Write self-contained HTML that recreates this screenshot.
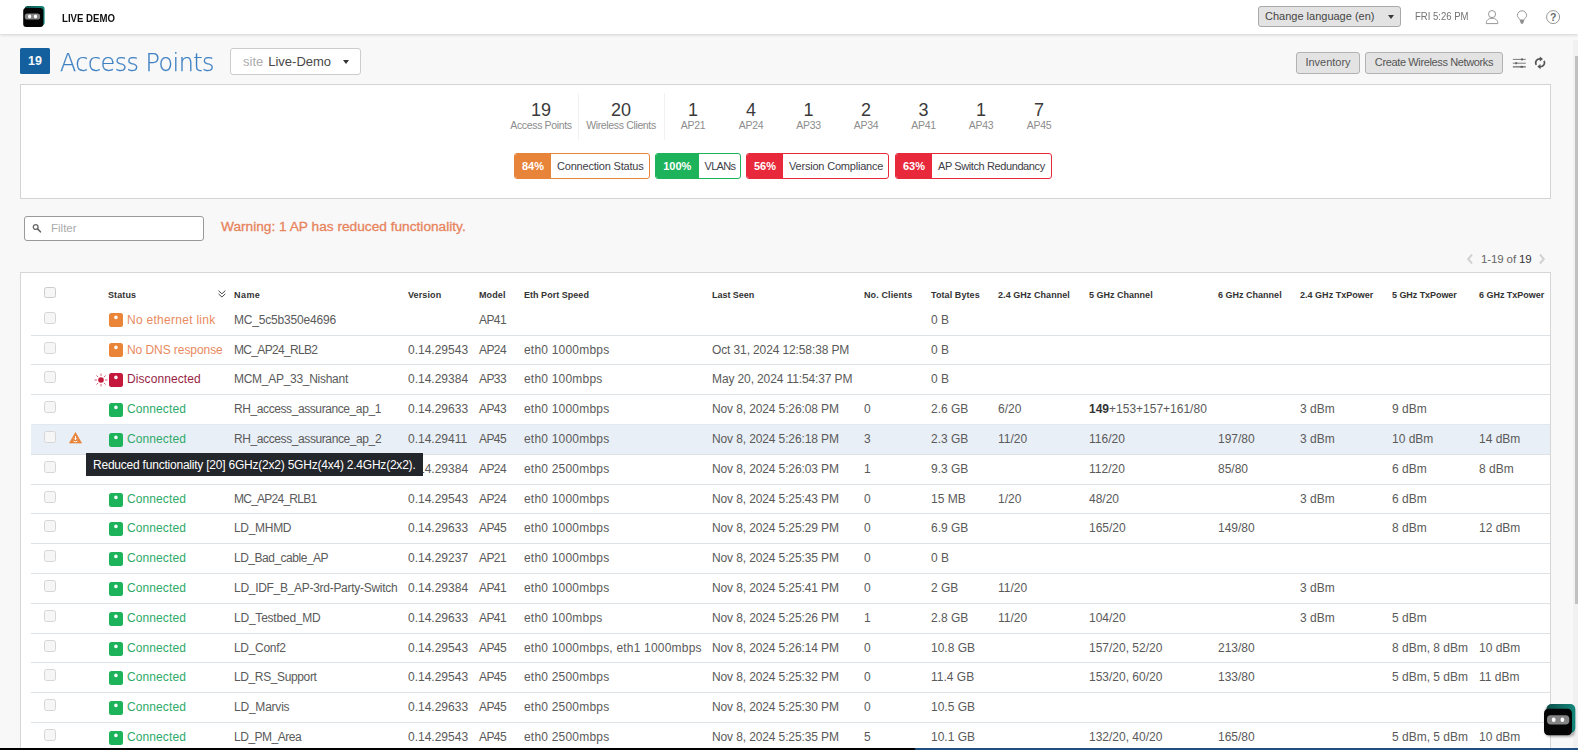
<!DOCTYPE html>
<html lang="en"><head><meta charset="utf-8"><title>Access Points</title>
<style>
*{box-sizing:border-box;margin:0;padding:0}
html,body{width:1578px;height:750px;overflow:hidden;background:#f8f8f8}
body{font-family:"Liberation Sans",sans-serif;font-size:12px;color:#555;position:relative}
.topbar{position:absolute;left:0;top:0;width:1578px;height:34px;background:#fff;box-shadow:0 1px 3px rgba(0,0,0,.16)}
.abs{position:absolute;white-space:nowrap}
.logo{position:absolute}
.brand{left:61.5px;top:12px;font-size:11px;font-weight:bold;color:#111;transform-origin:0 50%;transform:scaleX(.875)}
.lang{left:1258px;top:6px;width:143px;height:21px;background:#e3e3e3;border:1px solid #a9a9a9;border-radius:3px;font-size:11px;color:#454545;line-height:19px;padding-left:6px}
.lang:after{content:"";position:absolute;right:6.5px;top:8px;border:3.7px solid transparent;border-top:4.2px solid #3a3a3a;border-bottom:0}
.clock{left:1414.5px;top:10px;font-size:11.5px;color:#737373;transform-origin:0 50%;transform:scaleX(.83)}
.badge{left:20px;top:48px;width:30px;height:26px;background:#14609e;color:#f4f8fc;font-weight:bold;font-size:12.5px;line-height:27px;text-align:center;border-radius:1.5px}
.title{left:60px;top:46px;-webkit-text-stroke:.25px #3f80c2;font-family:'DejaVu Sans','Liberation Sans',sans-serif;font-weight:200;font-size:25px;color:#3f80c2;line-height:34px;letter-spacing:-.5px;transform-origin:0 50%;transform:scaleX(.95)}
.site{left:230px;top:48px;width:131px;height:27px;background:#fff;border:1px solid #ccc;border-radius:3px;font-size:13px;line-height:25px;color:#484848;padding-left:12px}
.site em{font-style:normal;color:#adadad;margin-right:5px}
.site:after{content:"";position:absolute;right:11.5px;top:10.5px;border:3.6px solid transparent;border-top:4.2px solid #333;border-bottom:0}
.btn{top:52px;height:22px;background:#e3e3e3;border:1px solid #b2b2b2;border-radius:3px;font-size:11px;color:#555;line-height:19.5px;text-align:center}
.panel{left:20px;top:84px;width:1531px;height:115px;background:#fff;border:1px solid #d3d3d3}
.stat{position:absolute;top:100px;text-align:center;white-space:nowrap;transform:translateX(-50%)}
.stat b{display:block;font-weight:normal;font-size:18px;line-height:20px;color:#3a3a3a}
.stat i{display:block;font-style:normal;font-size:10.5px;line-height:12px;color:#8c8c8c;margin-top:-1px;letter-spacing:-.35px}
.vdiv{position:absolute;top:93px;width:1px;height:47px;background:#f1f1f1}
.pill{position:absolute;top:153px;height:26px;border:1px solid;border-radius:3px;background:#fff;font-size:11px;line-height:25px;letter-spacing:-.2px;color:#3d4047;white-space:nowrap;overflow:hidden}
.pill b{display:inline-block;height:26px;margin-top:-1px;color:#fff;font-weight:bold;text-align:center;vertical-align:top;line-height:27px;letter-spacing:0;padding-left:1px}
.pill span{display:inline-block;padding-left:6px}
.filter{left:24px;top:216px;width:180px;height:25px;background:#fff;border:1px solid #9a9a9a;border-radius:3px;font-size:11.5px;color:#aaa;line-height:23px;padding-left:26px}
.warnmsg{left:221px;top:219px;font-size:13.7px;color:#e8835c;font-weight:normal;-webkit-text-stroke:0.3px #e8835c}
.pager{left:1481px;top:253px;font-size:11.5px;color:#666;letter-spacing:-.12px}
.pager b{color:#333;font-weight:normal}
.tbl{position:absolute;left:20px;top:272px;width:1531px;height:480px;background:#fff;border:1px solid #d6d6d6;border-bottom:0}
.tbl>*{position:absolute}
.hrow{left:0;top:0;width:1529px;height:33px}
.hrow .h{position:absolute;top:16px;font-size:9px;font-weight:bold;color:#333;white-space:nowrap;margin-left:-21px;line-height:12px}
.sort{position:absolute;left:196.8px;top:16.6px}
.cb{position:absolute;left:23px;top:6.4px;width:11.6px;height:11.3px;border:1px solid #d6d6d6;border-radius:2.5px;background:#f6f6f6}
.hcb{top:14.2px;border-color:#cbcbcb}
.row{left:10px;width:1519px;height:30px;border-top:1px solid #dde2e7;margin-top:-273px}
.row.first{border-top-color:transparent}
.row.hl{background:#e9eff6;border-top-color:#e2e8ef}
.row .cb{left:13px}
.row>span.c,.row>span.st{position:absolute;top:7px;line-height:14px;white-space:nowrap;font-size:12px;color:#5a5a5a}
.row>span.c{margin-left:-31px}
.row b{color:#333}
.ic{position:absolute;left:78.1px;top:8px;width:14px;height:13.5px;border-radius:2.5px}
.ic i{position:absolute;left:0;top:0;width:100%;height:100%;background:radial-gradient(circle at 6.9px 4.4px,rgba(255,255,255,.97) 0,rgba(255,255,255,.95) 1.25px,rgba(255,255,255,0) 2.3px)}
.ic.or{background:#ea8436}.ic.rd{background:#c4183c}.ic.gr{background:#1db35a}
.row>span.st{left:96px}
.st.or{color:#e98a60!important}.st.rd{color:#971f45!important}.st.gr{color:#2eaa69!important}
.sun{position:absolute;left:62.9px;top:8.2px}
.warn{position:absolute;left:37.8px;top:7.1px}
.tip{left:65px;top:180px;width:337px;letter-spacing:-.22px;height:23px;background:#23262b;color:#fff;font-size:12px;line-height:25px;padding-left:7px;white-space:nowrap}
.botbar{position:absolute;left:0;top:748px;width:1578px;height:2px;background:linear-gradient(90deg,#000 0,#000 914px,#1f4e80 916px,#1f4e80 100%)}
.sbtrack{position:absolute;left:1573px;top:40px;width:5px;height:708px;background:#f1f1f1}
.sbthumb{position:absolute;left:1575px;top:56px;width:3px;height:548px;background:#c1c1c1}
.chat{position:absolute;left:1541px;top:701px}

.c.name{letter-spacing:-.25px}
.c.mod{letter-spacing:-.6px}
.btn.w{letter-spacing:-.37px}

.c.eth{letter-spacing:.2px}
.c.seen{letter-spacing:-.12px}
.pill.v span{letter-spacing:-.7px}
.pill.r span{letter-spacing:-.4px}

</style></head>
<body>
<div class="sbtrack"></div><div class="sbthumb"></div>
<div class="topbar"></div>
<svg class="logo" style="left:22px;top:5px" width="25" height="24" viewBox="0 0 25 24"><defs><linearGradient id="tg" x1="0" y1="0" x2="1" y2="0"><stop offset="0" stop-color="#0b4f49"/><stop offset="1" stop-color="#14877a"/></linearGradient></defs><rect x="2.6" y="1" width="20" height="19.6" rx="3" fill="url(#tg)"/><rect x="1.2" y="3.1" width="20.1" height="19" rx="3" fill="#050505"/><rect x="2.8" y="8.6" width="15.3" height="5.9" rx="2.6" fill="#858585"/><ellipse cx="7.6" cy="11.6" rx="1.6" ry="2" fill="#fff"/><ellipse cx="13.5" cy="11.6" rx="1.6" ry="2" fill="#fff"/></svg>
<div class="abs brand">LIVE DEMO</div>
<div class="abs lang">Change language (en)</div>
<div class="abs clock">FRI 5:26 PM</div>
<svg class="logo" style="left:1484px;top:8px" width="16" height="18" viewBox="0 0 16 18"><circle cx="8.05" cy="6.1" r="3.55" fill="none" stroke="#8a8a8a" stroke-width=".9"/><path d="M2.3 15.6C2.1 12.2 4.6 10.3 8.05 10.3S14 12.2 13.8 15.6Z" fill="none" stroke="#8a8a8a" stroke-width=".9" stroke-linejoin="round"/></svg>
<svg class="logo" style="left:1515px;top:8px" width="14" height="18" viewBox="0 0 14 18"><path d="M4.7 11.5C4.5 10.2 2.4 9.5 2.4 7.4A4.6 4.6 0 0 1 11.6 7.4C11.6 9.5 9.5 10.2 9.3 11.5" fill="none" stroke="#8a8a8a" stroke-width=".9"/><path d="M4.5 11.4H9.5L8.1 15.4Q7 16.2 5.9 15.4Z" fill="#8e8e8e"/></svg>
<svg class="logo" style="left:1545px;top:9px" width="16" height="16" viewBox="0 0 16 16"><circle cx="8.1" cy="8.1" r="6.5" fill="none" stroke="#8a8a8a" stroke-width=".9"/><text x="8.1" y="11.9" font-family="Liberation Sans, sans-serif" font-size="10.5" font-weight="bold" fill="#6a6a6a" text-anchor="middle">?</text></svg>
<div class="abs badge">19</div>
<div class="abs title">Access Points</div>
<div class="abs site"><em>site</em>Live-Demo</div>
<div class="abs btn" style="left:1296px;width:64px">Inventory</div>
<div class="abs btn w" style="left:1365px;width:138px">Create Wireless Networks</div>
<svg class="logo" style="left:1512px;top:56px" width="15" height="13" viewBox="0 0 15 13"><g stroke="#6e6e6e" stroke-width=".9"><path d="M0.8 3.4H13.8M0.8 7.2H13.8"/></g><path d="M0.8 10.8H13.8" stroke="#8c8c8c" stroke-width="1.7"/><g fill="#5a5a5a"><rect x="9.2" y="2.4" width="1.7" height="2"/><rect x="3.4" y="6.2" width="1.7" height="2"/><rect x="8.6" y="9.9" width="2.2" height="1.8"/></g></svg>
<svg class="logo" style="left:1534px;top:56px" width="12" height="14" viewBox="0 0 12 14"><path d="M2.3 8.9A4 4 0 0 1 6.4 2.9" fill="none" stroke="#555" stroke-width="1.7"/><path d="M5.8 0.5L9 3.1L5.8 5.6Z" fill="#555"/><path d="M10 4.9A4 4 0 0 1 5.9 10.7" fill="none" stroke="#555" stroke-width="1.7"/><path d="M6.5 8.1L3.3 10.6L6.5 13.2Z" fill="#555"/></svg>
<div class="abs panel"></div>
<div class="stat" style="left:541px"><b>19</b><i>Access Points</i></div>
<div class="vdiv" style="left:578px"></div>
<div class="stat" style="left:621px"><b>20</b><i>Wireless Clients</i></div>
<div class="vdiv" style="left:664px"></div>
<div class="stat" style="left:693px"><b>1</b><i>AP21</i></div>
<div class="stat" style="left:751px"><b>4</b><i>AP24</i></div>
<div class="stat" style="left:808.5px"><b>1</b><i>AP33</i></div>
<div class="stat" style="left:866px"><b>2</b><i>AP34</i></div>
<div class="stat" style="left:923.5px"><b>3</b><i>AP41</i></div>
<div class="stat" style="left:981px"><b>1</b><i>AP43</i></div>
<div class="stat" style="left:1039px"><b>7</b><i>AP45</i></div>
<div class="pill" style="left:514px;width:136px;border-color:#e8833a"><b style="width:37px;background:#e8833a;margin-left:-1px">84%</b><span>Connection Status</span></div>
<div class="pill v" style="left:655px;width:86px;border-color:#1db35a"><b style="width:43.5px;background:#1db35a;margin-left:-1px">100%</b><span>VLANs</span></div>
<div class="pill" style="left:746px;width:143px;border-color:#e8293b"><b style="width:37px;background:#e8293b;margin-left:-1px">56%</b><span>Version Compliance</span></div>
<div class="pill r" style="left:895px;width:157px;border-color:#e8293b"><b style="width:37px;background:#e8293b;margin-left:-1px">63%</b><span>AP Switch Redundancy</span></div>
<div class="abs filter">Filter</div>
<svg class="logo" style="left:32px;top:223px" width="10" height="10" viewBox="0 0 10 10"><circle cx="3.7" cy="4" r="2.4" fill="none" stroke="#666" stroke-width="1.3"/><path d="M5.6 5.9L8.4 8.8" stroke="#666" stroke-width="1.6" stroke-linecap="round"/></svg>
<div class="abs warnmsg">Warning: 1 AP has reduced functionality.</div>
<svg class="logo" style="left:1466px;top:253px" width="8" height="12" viewBox="0 0 8 12"><path d="M6 1.5L2.2 6L6 10.5" fill="none" stroke="#d2d2d2" stroke-width="2"/></svg>
<div class="abs pager">1-19 of <b>19</b></div>
<svg class="logo" style="left:1538px;top:253px" width="8" height="12" viewBox="0 0 8 12"><path d="M2 1.5L5.8 6L2 10.5" fill="none" stroke="#d2d2d2" stroke-width="2"/></svg>
<div class="tbl">
<div class="hrow"><span class="cb hcb"></span><span class="h" style="left:108px;letter-spacing:.11px">Status</span><svg class="sort" viewBox="0 0 8 8" width="8" height="8"><path d="M0.5 0.7 L3.9 3.8 L7.3 0.7 M0.5 3.9 L3.9 7 L7.3 3.9" fill="none" stroke="#484848" stroke-width="1"/></svg><span class="h" style="left:234px;letter-spacing:0.45px">Name</span><span class="h" style="left:408px;letter-spacing:0.11px">Version</span><span class="h" style="left:479px;letter-spacing:0.12px">Model</span><span class="h" style="left:524px;letter-spacing:0.03px">Eth Port Speed</span><span class="h" style="left:712px;letter-spacing:-0.04px">Last Seen</span><span class="h" style="left:864px;letter-spacing:0.12px">No. Clients</span><span class="h" style="left:931px;letter-spacing:0.08px">Total Bytes</span><span class="h" style="left:998px;letter-spacing:0.06px">2.4 GHz Channel</span><span class="h" style="left:1089px;letter-spacing:0.01px">5 GHz Channel</span><span class="h" style="left:1218px;letter-spacing:0.01px">6 GHz Channel</span><span class="h" style="left:1300px;letter-spacing:0.02px">2.4 GHz TxPower</span><span class="h" style="left:1392px;letter-spacing:-0.06px">5 GHz TxPower</span><span class="h" style="left:1479px;letter-spacing:-0.03px">6 GHz TxPower</span></div>
<div class="row first" style="top:305px"><span class="cb"></span><span class="ic or" style="top:7px"><i></i></span><span class="st or" style="letter-spacing:0.28px">No ethernet link</span><span class="c name" style="left:234px;letter-spacing:-0.18px">MC_5c5b350e4696</span><span class="c mod" style="left:479px">AP41</span><span class="c byt" style="left:931px">0 B</span></div>
<div class="row" style="top:335px"><span class="cb"></span><span class="ic or" style="top:7px"><i></i></span><span class="st or" style="letter-spacing:-0.07px">No DNS response</span><span class="c name" style="left:234px;letter-spacing:-0.67px">MC_AP24_RLB2</span><span class="c ver" style="left:408px">0.14.29543</span><span class="c mod" style="left:479px">AP24</span><span class="c eth" style="left:524px">eth0 1000mbps</span><span class="c seen" style="left:712px">Oct 31, 2024 12:58:38 PM</span><span class="c byt" style="left:931px">0 B</span></div>
<div class="row" style="top:364px"><span class="cb"></span><svg class="sun" viewBox="0 0 14 14" width="14" height="14"><circle cx="7" cy="7" r="2.8" fill="#c4183c"/><g stroke="#d2506c" stroke-width=".9" stroke-linecap="round"><path d="M7 0.9V2.7M7 11.3V13.1M0.9 7H2.7M11.3 7H13.1M2.7 2.7L3.9 3.9M10.1 10.1L11.3 11.3M2.7 11.3L3.9 10.1M10.1 3.9L11.3 2.7"/></g></svg><span class="ic rd"><i></i></span><span class="st rd" style="letter-spacing:0.08px">Disconnected</span><span class="c name" style="left:234px;letter-spacing:-0.28px">MCM_AP_33_Nishant</span><span class="c ver" style="left:408px">0.14.29384</span><span class="c mod" style="left:479px">AP33</span><span class="c eth" style="left:524px">eth0 100mbps</span><span class="c seen" style="left:712px">May 20, 2024 11:54:37 PM</span><span class="c byt" style="left:931px">0 B</span></div>
<div class="row" style="top:394px"><span class="cb"></span><span class="ic gr"><i></i></span><span class="st gr" style="letter-spacing:0.1px">Connected</span><span class="c name" style="left:234px;letter-spacing:-0.41px">RH_access_assurance_ap_1</span><span class="c ver" style="left:408px">0.14.29633</span><span class="c mod" style="left:479px">AP43</span><span class="c eth" style="left:524px">eth0 1000mbps</span><span class="c seen" style="left:712px">Nov 8, 2024 5:26:08 PM</span><span class="c cli" style="left:864px">0</span><span class="c byt" style="left:931px">2.6 GB</span><span class="c c24" style="left:998px">6/20</span><span class="c c5" style="left:1089px"><b>149</b>+153+157+161/80</span><span class="c t24" style="left:1300px">3 dBm</span><span class="c t5" style="left:1392px">9 dBm</span></div>
<div class="row hl" style="top:424px"><span class="cb"></span><svg class="warn" viewBox="0 0 13 12" width="13" height="11.8"><path d="M6.5 0.4 L12.7 11.3 H0.3 Z" fill="#e8833a" stroke="#e8833a" stroke-width="0.6" stroke-linejoin="round"/><path d="M6.5 4.2V7.6M5 6.4L6.5 7.9L8 6.4M4.6 9.4Q6.5 10.6 8.4 9.4" fill="none" stroke="#fff" stroke-width="1"/></svg><span class="ic gr"><i></i></span><span class="st gr" style="letter-spacing:0.1px">Connected</span><span class="c name" style="left:234px;letter-spacing:-0.4px">RH_access_assurance_ap_2</span><span class="c ver" style="left:408px">0.14.29411</span><span class="c mod" style="left:479px">AP45</span><span class="c eth" style="left:524px">eth0 1000mbps</span><span class="c seen" style="left:712px">Nov 8, 2024 5:26:18 PM</span><span class="c cli" style="left:864px">3</span><span class="c byt" style="left:931px">2.3 GB</span><span class="c c24" style="left:998px">11/20</span><span class="c c5" style="left:1089px">116/20</span><span class="c c6" style="left:1218px">197/80</span><span class="c t24" style="left:1300px">3 dBm</span><span class="c t5" style="left:1392px">10 dBm</span><span class="c t6" style="left:1479px">14 dBm</span></div>
<div class="row" style="top:454px"><span class="cb"></span><span class="c ver" style="left:408px">0.14.29384</span><span class="c mod" style="left:479px">AP24</span><span class="c eth" style="left:524px">eth0 2500mbps</span><span class="c seen" style="left:712px">Nov 8, 2024 5:26:03 PM</span><span class="c cli" style="left:864px">1</span><span class="c byt" style="left:931px">9.3 GB</span><span class="c c5" style="left:1089px">112/20</span><span class="c c6" style="left:1218px">85/80</span><span class="c t5" style="left:1392px">6 dBm</span><span class="c t6" style="left:1479px">8 dBm</span></div>
<div class="row" style="top:484px"><span class="cb"></span><span class="ic gr"><i></i></span><span class="st gr" style="letter-spacing:0.1px">Connected</span><span class="c name" style="left:234px;letter-spacing:-0.75px">MC_AP24_RLB1</span><span class="c ver" style="left:408px">0.14.29543</span><span class="c mod" style="left:479px">AP24</span><span class="c eth" style="left:524px">eth0 1000mbps</span><span class="c seen" style="left:712px">Nov 8, 2024 5:25:43 PM</span><span class="c cli" style="left:864px">0</span><span class="c byt" style="left:931px">15 MB</span><span class="c c24" style="left:998px">1/20</span><span class="c c5" style="left:1089px">48/20</span><span class="c t24" style="left:1300px">3 dBm</span><span class="c t5" style="left:1392px">6 dBm</span></div>
<div class="row" style="top:513px"><span class="cb"></span><span class="ic gr"><i></i></span><span class="st gr" style="letter-spacing:0.1px">Connected</span><span class="c name" style="left:234px;letter-spacing:-0.3px">LD_MHMD</span><span class="c ver" style="left:408px">0.14.29633</span><span class="c mod" style="left:479px">AP45</span><span class="c eth" style="left:524px">eth0 1000mbps</span><span class="c seen" style="left:712px">Nov 8, 2024 5:25:29 PM</span><span class="c cli" style="left:864px">0</span><span class="c byt" style="left:931px">6.9 GB</span><span class="c c5" style="left:1089px">165/20</span><span class="c c6" style="left:1218px">149/80</span><span class="c t5" style="left:1392px">8 dBm</span><span class="c t6" style="left:1479px">12 dBm</span></div>
<div class="row" style="top:543px"><span class="cb"></span><span class="ic gr"><i></i></span><span class="st gr" style="letter-spacing:0.1px">Connected</span><span class="c name" style="left:234px;letter-spacing:-0.49px">LD_Bad_cable_AP</span><span class="c ver" style="left:408px">0.14.29237</span><span class="c mod" style="left:479px">AP21</span><span class="c eth" style="left:524px">eth0 1000mbps</span><span class="c seen" style="left:712px">Nov 8, 2024 5:25:35 PM</span><span class="c cli" style="left:864px">0</span><span class="c byt" style="left:931px">0 B</span></div>
<div class="row" style="top:573px"><span class="cb"></span><span class="ic gr"><i></i></span><span class="st gr" style="letter-spacing:0.1px">Connected</span><span class="c name" style="left:234px;letter-spacing:-0.29px">LD_IDF_B_AP-3rd-Party-Switch</span><span class="c ver" style="left:408px">0.14.29384</span><span class="c mod" style="left:479px">AP41</span><span class="c eth" style="left:524px">eth0 1000mbps</span><span class="c seen" style="left:712px">Nov 8, 2024 5:25:41 PM</span><span class="c cli" style="left:864px">0</span><span class="c byt" style="left:931px">2 GB</span><span class="c c24" style="left:998px">11/20</span><span class="c t24" style="left:1300px">3 dBm</span></div>
<div class="row" style="top:603px"><span class="cb"></span><span class="ic gr"><i></i></span><span class="st gr" style="letter-spacing:0.1px">Connected</span><span class="c name" style="left:234px;letter-spacing:-0.22px">LD_Testbed_MD</span><span class="c ver" style="left:408px">0.14.29633</span><span class="c mod" style="left:479px">AP41</span><span class="c eth" style="left:524px">eth0 100mbps</span><span class="c seen" style="left:712px">Nov 8, 2024 5:25:26 PM</span><span class="c cli" style="left:864px">1</span><span class="c byt" style="left:931px">2.8 GB</span><span class="c c24" style="left:998px">11/20</span><span class="c c5" style="left:1089px">104/20</span><span class="c t24" style="left:1300px">3 dBm</span><span class="c t5" style="left:1392px">5 dBm</span></div>
<div class="row" style="top:633px"><span class="cb"></span><span class="ic gr"><i></i></span><span class="st gr" style="letter-spacing:0.1px">Connected</span><span class="c name" style="left:234px;letter-spacing:-0.31px">LD_Conf2</span><span class="c ver" style="left:408px">0.14.29543</span><span class="c mod" style="left:479px">AP45</span><span class="c eth" style="left:524px">eth0 1000mbps, eth1 1000mbps</span><span class="c seen" style="left:712px">Nov 8, 2024 5:26:14 PM</span><span class="c cli" style="left:864px">0</span><span class="c byt" style="left:931px">10.8 GB</span><span class="c c5" style="left:1089px">157/20, 52/20</span><span class="c c6" style="left:1218px">213/80</span><span class="c t5" style="left:1392px">8 dBm, 8 dBm</span><span class="c t6" style="left:1479px">10 dBm</span></div>
<div class="row" style="top:662px"><span class="cb"></span><span class="ic gr"><i></i></span><span class="st gr" style="letter-spacing:0.1px">Connected</span><span class="c name" style="left:234px;letter-spacing:-0.38px">LD_RS_Support</span><span class="c ver" style="left:408px">0.14.29543</span><span class="c mod" style="left:479px">AP45</span><span class="c eth" style="left:524px">eth0 2500mbps</span><span class="c seen" style="left:712px">Nov 8, 2024 5:25:32 PM</span><span class="c cli" style="left:864px">0</span><span class="c byt" style="left:931px">11.4 GB</span><span class="c c5" style="left:1089px">153/20, 60/20</span><span class="c c6" style="left:1218px">133/80</span><span class="c t5" style="left:1392px">5 dBm, 5 dBm</span><span class="c t6" style="left:1479px">11 dBm</span></div>
<div class="row" style="top:692px"><span class="cb"></span><span class="ic gr"><i></i></span><span class="st gr" style="letter-spacing:0.1px">Connected</span><span class="c name" style="left:234px;letter-spacing:-0.22px">LD_Marvis</span><span class="c ver" style="left:408px">0.14.29633</span><span class="c mod" style="left:479px">AP45</span><span class="c eth" style="left:524px">eth0 2500mbps</span><span class="c seen" style="left:712px">Nov 8, 2024 5:25:30 PM</span><span class="c cli" style="left:864px">0</span><span class="c byt" style="left:931px">10.5 GB</span></div>
<div class="row" style="top:722px"><span class="cb"></span><span class="ic gr"><i></i></span><span class="st gr" style="letter-spacing:0.1px">Connected</span><span class="c name" style="left:234px;letter-spacing:-0.48px">LD_PM_Area</span><span class="c ver" style="left:408px">0.14.29543</span><span class="c mod" style="left:479px">AP45</span><span class="c eth" style="left:524px">eth0 2500mbps</span><span class="c seen" style="left:712px">Nov 8, 2024 5:25:35 PM</span><span class="c cli" style="left:864px">5</span><span class="c byt" style="left:931px">10.1 GB</span><span class="c c5" style="left:1089px">132/20, 40/20</span><span class="c c6" style="left:1218px">165/80</span><span class="c t5" style="left:1392px">5 dBm, 5 dBm</span><span class="c t6" style="left:1479px">10 dBm</span></div>
<div class="tip">Reduced functionality [20] 6GHz(2x2) 5GHz(4x4) 2.4GHz(2x2).</div>
</div>
<svg class="chat" width="38" height="40" viewBox="0 0 38 40"><defs><filter id="sh" x="-20%" y="-20%" width="140%" height="140%"><feGaussianBlur stdDeviation="1.3"/></filter></defs><rect x="4" y="5" width="30" height="31" rx="5" fill="#000" opacity=".28" filter="url(#sh)"/><rect x="5.5" y="3" width="28.8" height="29" rx="5" fill="url(#tg)"/><rect x="3" y="7.7" width="28" height="26.6" rx="4.5" fill="#050505"/><rect x="6" y="14.3" width="22.3" height="9.1" rx="3.6" fill="#858585"/><ellipse cx="12.7" cy="18.7" rx="1.9" ry="2.3" fill="#fff"/><ellipse cx="21.4" cy="18.7" rx="1.9" ry="2.3" fill="#fff"/></svg>
<div class="botbar"></div>
</body></html>
